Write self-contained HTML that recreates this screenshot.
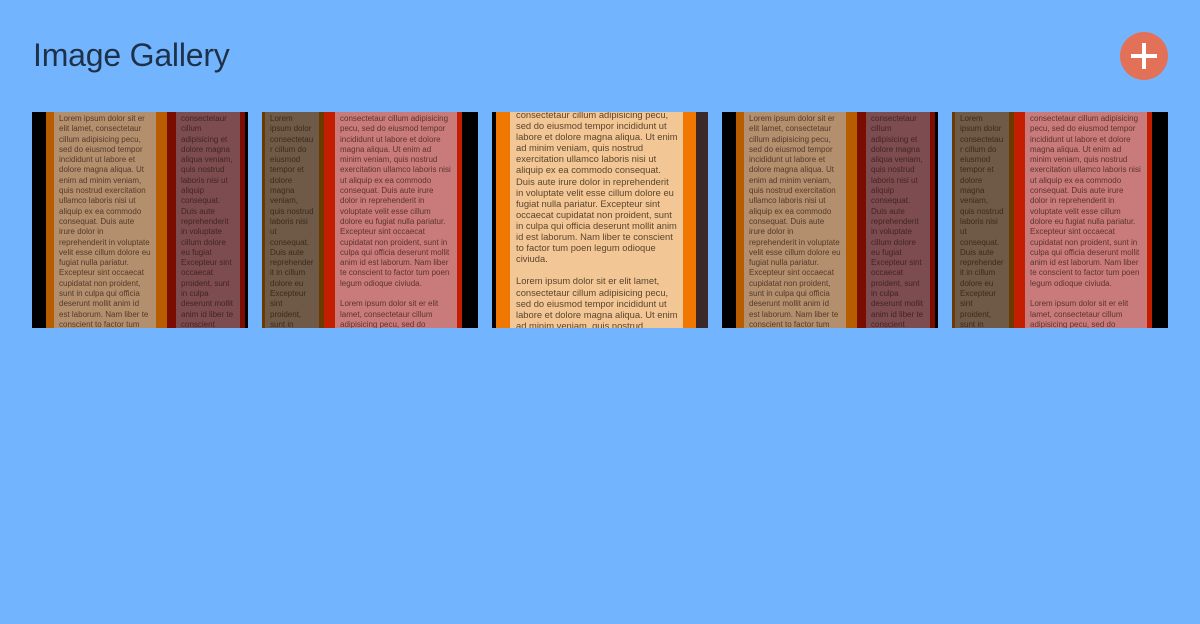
<!DOCTYPE html>
<html><head><style>
*{margin:0;padding:0;box-sizing:border-box}
body{width:1200px;height:624px;background:#72b5fe;font-family:"Liberation Sans",sans-serif;position:relative;overflow:hidden}
h1{position:absolute;left:33px;top:37px;font-size:32px;font-weight:400;color:#1e3148;letter-spacing:-0.2px}
.add{position:absolute;left:1120px;top:32px;width:48px;height:48px;border-radius:50%;background:#e37157}
.add:before{content:"";position:absolute;left:11px;top:22px;width:26px;height:4px;background:#fff}
.add:after{content:"";position:absolute;left:22px;top:11px;width:4px;height:26px;background:#fff}
.t{position:absolute;top:112px;width:216px;height:216px;overflow:hidden;background:#000}
.t div{position:absolute;top:0;height:216px;overflow:hidden}
.p{font-size:8px;line-height:10.3px;padding:2px 5px;color:rgba(40,20,10,.7);word-break:break-word}
.p.big{font-size:9.4px;line-height:11.1px;padding:0 5px 0 6px;color:rgba(50,35,20,.8)}
</style></head><body>
<h1>Image Gallery</h1>
<div class="add"></div>

<div class="t" style="left:32px">
 <div style="left:14px;width:10px;background:#b85c00"></div>
 <div style="left:22px;width:102px;background:#b38f6e" class="p">Lorem ipsum dolor sit er elit lamet, consectetaur cillum adipisicing pecu, sed do eiusmod tempor incididunt ut labore et dolore magna aliqua. Ut enim ad minim veniam, quis nostrud exercitation ullamco laboris nisi ut aliquip ex ea commodo consequat. Duis aute irure dolor in reprehenderit in voluptate velit esse cillum dolore eu fugiat nulla pariatur. Excepteur sint occaecat cupidatat non proident, sunt in culpa qui officia deserunt mollit anim id est laborum. Nam liber te conscient to factor tum poen legum odioque civiuda.<br><br>Lorem ipsum dolor sit er elit lamet, consectetaur cillum adipisicing pecu, sed do eiusmod tempor incididunt ut labore et dolore magna aliqua. Ut enim ad minim veniam, quis nostrud exercitation ullamco laboris nisi ut aliquip ex ea commodo consequat. Duis aute irure dolor in</div>
 <div style="left:124px;width:11px;background:#b85c00"></div>
 <div style="left:135px;width:78px;background:#7a0c00"></div>
 <div style="left:144px;width:64px;background:#7d4c50" class="p">consectetaur cillum adipisicing et dolore magna aliqua veniam, quis nostrud laboris nisi ut aliquip consequat. Duis aute reprehenderit in voluptate cillum dolore eu fugiat Excepteur sint occaecat proident, sunt in culpa deserunt mollit anim id liber te conscient legum odioque civiuda.<br><br>Lorem ipsum dolor sit consectetaur cillum do eiusmod tempor et dolore magna aliqua veniam, quis nostrud laboris nisi ut aliquip</div>
</div>

<div class="t" style="left:262px">
 <div style="left:0;width:62px;background:#6b3a00"></div>
 <div style="left:3px;width:54px;background:#6e5a46" class="p">Lorem ipsum dolor consectetaur cillum do eiusmod tempor et dolore magna veniam, quis nostrud laboris nisi ut consequat. Duis aute reprehenderit in cillum dolore eu Excepteur sint proident, sunt in deserunt mollit liber te conscient legum odioque.<br><br>Lorem ipsum dolor consectetaur cillum do eiusmod tempor et dolore magna veniam, quis nostrud laboris nisi ut</div>
 <div style="left:62px;width:138px;background:#c41e00"></div>
 <div style="left:73px;width:122px;background:#c97b7b" class="p">consectetaur cillum adipisicing pecu, sed do eiusmod tempor incididunt ut labore et dolore magna aliqua. Ut enim ad minim veniam, quis nostrud exercitation ullamco laboris nisi ut aliquip ex ea commodo consequat. Duis aute irure dolor in reprehenderit in voluptate velit esse cillum dolore eu fugiat nulla pariatur. Excepteur sint occaecat cupidatat non proident, sunt in culpa qui officia deserunt mollit anim id est laborum. Nam liber te conscient to factor tum poen legum odioque civiuda.<br><br>Lorem ipsum dolor sit er elit lamet, consectetaur cillum adipisicing pecu, sed do eiusmod tempor incididunt ut labore et dolore magna aliqua. Ut enim ad minim veniam, quis nostrud exercitation ullamco laboris nisi ut aliquip ex ea commodo consequat. Duis aute irure dolor in</div>
</div>

<div class="t" style="left:492px">
 <div style="left:4px;width:200px;background:#f07800"></div>
 <div style="left:18px;width:173px;background:#f3c795" class="p big"><div style="position:relative;top:-3px;height:auto">consectetaur cillum adipisicing pecu, sed do eiusmod tempor incididunt ut labore et dolore magna aliqua. Ut enim ad minim veniam, quis nostrud exercitation ullamco laboris nisi ut aliquip ex ea commodo consequat. Duis aute irure dolor in reprehenderit in voluptate velit esse cillum dolore eu fugiat nulla pariatur. Excepteur sint occaecat cupidatat non proident, sunt in culpa qui officia deserunt mollit anim id est laborum. Nam liber te conscient to factor tum poen legum odioque civiuda.<br><br>Lorem ipsum dolor sit er elit lamet, consectetaur cillum adipisicing pecu, sed do eiusmod tempor incididunt ut labore et dolore magna aliqua. Ut enim ad minim veniam, quis nostrud exercitation ullamco laboris nisi ut aliquip ex ea commodo consequat. Duis aute irure dolor in</div></div>
 <div style="left:204px;width:12px;background:#3b2828"></div>
</div>

<div class="t" style="left:722px">
 <div style="left:14px;width:10px;background:#b85c00"></div>
 <div style="left:22px;width:102px;background:#b38f6e" class="p">Lorem ipsum dolor sit er elit lamet, consectetaur cillum adipisicing pecu, sed do eiusmod tempor incididunt ut labore et dolore magna aliqua. Ut enim ad minim veniam, quis nostrud exercitation ullamco laboris nisi ut aliquip ex ea commodo consequat. Duis aute irure dolor in reprehenderit in voluptate velit esse cillum dolore eu fugiat nulla pariatur. Excepteur sint occaecat cupidatat non proident, sunt in culpa qui officia deserunt mollit anim id est laborum. Nam liber te conscient to factor tum poen legum odioque civiuda.<br><br>Lorem ipsum dolor sit er elit lamet, consectetaur cillum adipisicing pecu, sed do eiusmod tempor incididunt ut labore et dolore magna aliqua. Ut enim ad minim veniam, quis nostrud exercitation ullamco laboris nisi ut aliquip ex ea commodo consequat. Duis aute irure dolor in</div>
 <div style="left:124px;width:11px;background:#b85c00"></div>
 <div style="left:135px;width:78px;background:#7a0c00"></div>
 <div style="left:144px;width:64px;background:#7d4c50" class="p">consectetaur cillum adipisicing et dolore magna aliqua veniam, quis nostrud laboris nisi ut aliquip consequat. Duis aute reprehenderit in voluptate cillum dolore eu fugiat Excepteur sint occaecat proident, sunt in culpa deserunt mollit anim id liber te conscient legum odioque civiuda.<br><br>Lorem ipsum dolor sit consectetaur cillum do eiusmod tempor et dolore magna aliqua veniam, quis nostrud laboris nisi ut aliquip</div>
</div>

<div class="t" style="left:952px">
 <div style="left:0;width:62px;background:#6b3a00"></div>
 <div style="left:3px;width:54px;background:#6e5a46" class="p">Lorem ipsum dolor consectetaur cillum do eiusmod tempor et dolore magna veniam, quis nostrud laboris nisi ut consequat. Duis aute reprehenderit in cillum dolore eu Excepteur sint proident, sunt in deserunt mollit liber te conscient legum odioque.<br><br>Lorem ipsum dolor consectetaur cillum do eiusmod tempor et dolore magna veniam, quis nostrud laboris nisi ut</div>
 <div style="left:62px;width:138px;background:#c41e00"></div>
 <div style="left:73px;width:122px;background:#c97b7b" class="p">consectetaur cillum adipisicing pecu, sed do eiusmod tempor incididunt ut labore et dolore magna aliqua. Ut enim ad minim veniam, quis nostrud exercitation ullamco laboris nisi ut aliquip ex ea commodo consequat. Duis aute irure dolor in reprehenderit in voluptate velit esse cillum dolore eu fugiat nulla pariatur. Excepteur sint occaecat cupidatat non proident, sunt in culpa qui officia deserunt mollit anim id est laborum. Nam liber te conscient to factor tum poen legum odioque civiuda.<br><br>Lorem ipsum dolor sit er elit lamet, consectetaur cillum adipisicing pecu, sed do eiusmod tempor incididunt ut labore et dolore magna aliqua. Ut enim ad minim veniam, quis nostrud exercitation ullamco laboris nisi ut aliquip ex ea commodo consequat. Duis aute irure dolor in</div>
</div>
</body></html>
